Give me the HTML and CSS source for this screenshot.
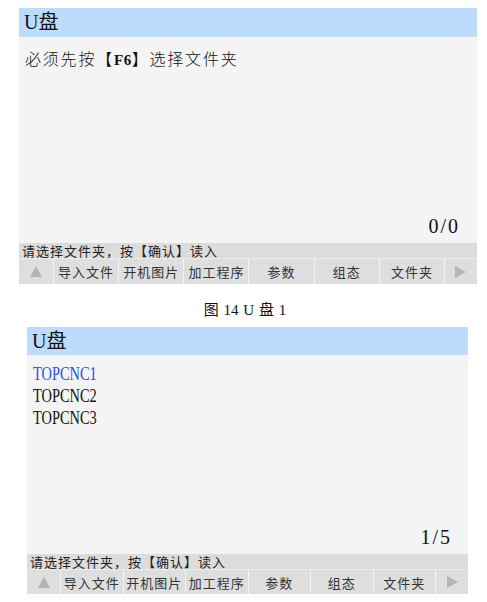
FILE: index.html
```html
<!DOCTYPE html>
<html>
<head>
<meta charset="utf-8">
<link rel="stylesheet" href="styles.css">
</head>
<body>
<div class="panel panel-a">
  <div class="title">U盘</div>
  <div class="content">
    <div class="msg">必须先按【<span class="latin">F6</span>】选择文件夹</div>
    <div class="count">0/0</div>
  </div>
  <div class="status">请选择文件夹，按【确认】读入</div>
  <div class="keys">
    <div class="key arrow"><svg width="12" height="11" viewBox="0 0 12 11"><polygon points="6,0 12,11 0,11" fill="#b4b4b4"/></svg></div>
    <div class="key">导入文件</div>
    <div class="key">开机图片</div>
    <div class="key">加工程序</div>
    <div class="key">参数</div>
    <div class="key">组态</div>
    <div class="key">文件夹</div>
    <div class="key arrow"><svg width="11" height="12" viewBox="0 0 11 12"><polygon points="0,0 11,6 0,12" fill="#b4b4b4"/></svg></div>
  </div>
</div>

<div class="caption">图 14 U 盘 1</div>

<div class="panel panel-b">
  <div class="title">U盘</div>
  <div class="content">
    <ul class="list">
      <li class="sel">TOPCNC1</li>
      <li>TOPCNC2</li>
      <li>TOPCNC3</li>
    </ul>
    <div class="count">1/5</div>
  </div>
  <div class="status">请选择文件夹，按【确认】读入</div>
  <div class="keys">
    <div class="key arrow"><svg width="12" height="11" viewBox="0 0 12 11"><polygon points="6,0 12,11 0,11" fill="#b4b4b4"/></svg></div>
    <div class="key">导入文件</div>
    <div class="key">开机图片</div>
    <div class="key">加工程序</div>
    <div class="key">参数</div>
    <div class="key">组态</div>
    <div class="key">文件夹</div>
    <div class="key arrow"><svg width="11" height="12" viewBox="0 0 11 12"><polygon points="0,0 11,6 0,12" fill="#b4b4b4"/></svg></div>
  </div>
</div>
</body>
</html>
```

FILE: styles.css
```css
html, body {
  margin: 0;
  padding: 0;
  background: #ffffff;
}
body {
  font-family: "Liberation Serif", "Noto Sans CJK SC", serif;
  color: #111;
  padding-top: 8px;
}
.panel {
  display: flex;
  flex-direction: column;
}
.panel-a {
  margin-left: 19px;
  width: 458px;
}
.panel-b {
  margin-left: 27px;
  width: 441px;
}
.title {
  background: #bddcfd;
  height: 29px;
  line-height: 29px;
  font-size: 20px;
  padding-left: 5px;
  color: #111;
}
.panel-b .title {
  height: 28px;
  line-height: 28px;
}
.content {
  background: #f4f4f4;
  display: flex;
  flex-direction: column;
  justify-content: space-between;
}
.panel-a .content {
  height: 206px;
  padding: 10px 19px 6px 6px;
  box-sizing: border-box;
}
.panel-b .content {
  height: 199px;
  padding: 8px 18px 6px 6px;
  box-sizing: border-box;
}
.msg {
  font-family: "Noto Sans CJK SC", sans-serif;
  font-size: 16px;
  line-height: 22px;
  font-weight: 300;
  letter-spacing: 1.8px;
  color: #111;
}
.latin {
  font-family: "Liberation Serif", serif;
  font-weight: 700;
  font-size: 15px;
  letter-spacing: 0.5px;
}
.count {
  align-self: flex-end;
  font-size: 20px;
  line-height: 22px;
  letter-spacing: 2px;
  margin-right: -2px;
  color: #111;
}
.list {
  list-style: none;
  margin: 0;
  padding: 0;
}
.list li {
  font-size: 18px;
  line-height: 22px;
  color: #111;
  transform: scaleX(0.8);
  transform-origin: left center;
}
.list li.sel {
  color: #2a4bf2;
}
.status {
  background: #dcdcdc;
  height: 15px;
  line-height: 15px;
  font-family: "Noto Sans CJK SC", sans-serif;
  font-size: 13px;
  letter-spacing: 1px;
  padding-left: 3px;
  color: #222;
  border-bottom: 1px solid #ececec;
}
.keys {
  display: grid;
  height: 24px;
  background: #dedede;
}
.panel-a .keys {
  grid-template-columns: 34px repeat(6, 1fr) 33px;
  height: 25px;
}
.panel-b .keys {
  grid-template-columns: 33px repeat(6, 1fr) 33px;
}
.key {
  display: flex;
  align-items: center;
  justify-content: center;
  font-family: "Noto Sans CJK SC", sans-serif;
  font-size: 13px;
  letter-spacing: 1px;
  color: #333;
  border-left: 1px solid #f4f4f4;
}
.key:first-child {
  border-left: none;
}
.caption {
  text-align: center;
  font-size: 15px;
  line-height: 20px;
  margin: 16px 0 7px;
  padding-left: 3px;
  word-spacing: 1px;
  color: #111;
}
```
